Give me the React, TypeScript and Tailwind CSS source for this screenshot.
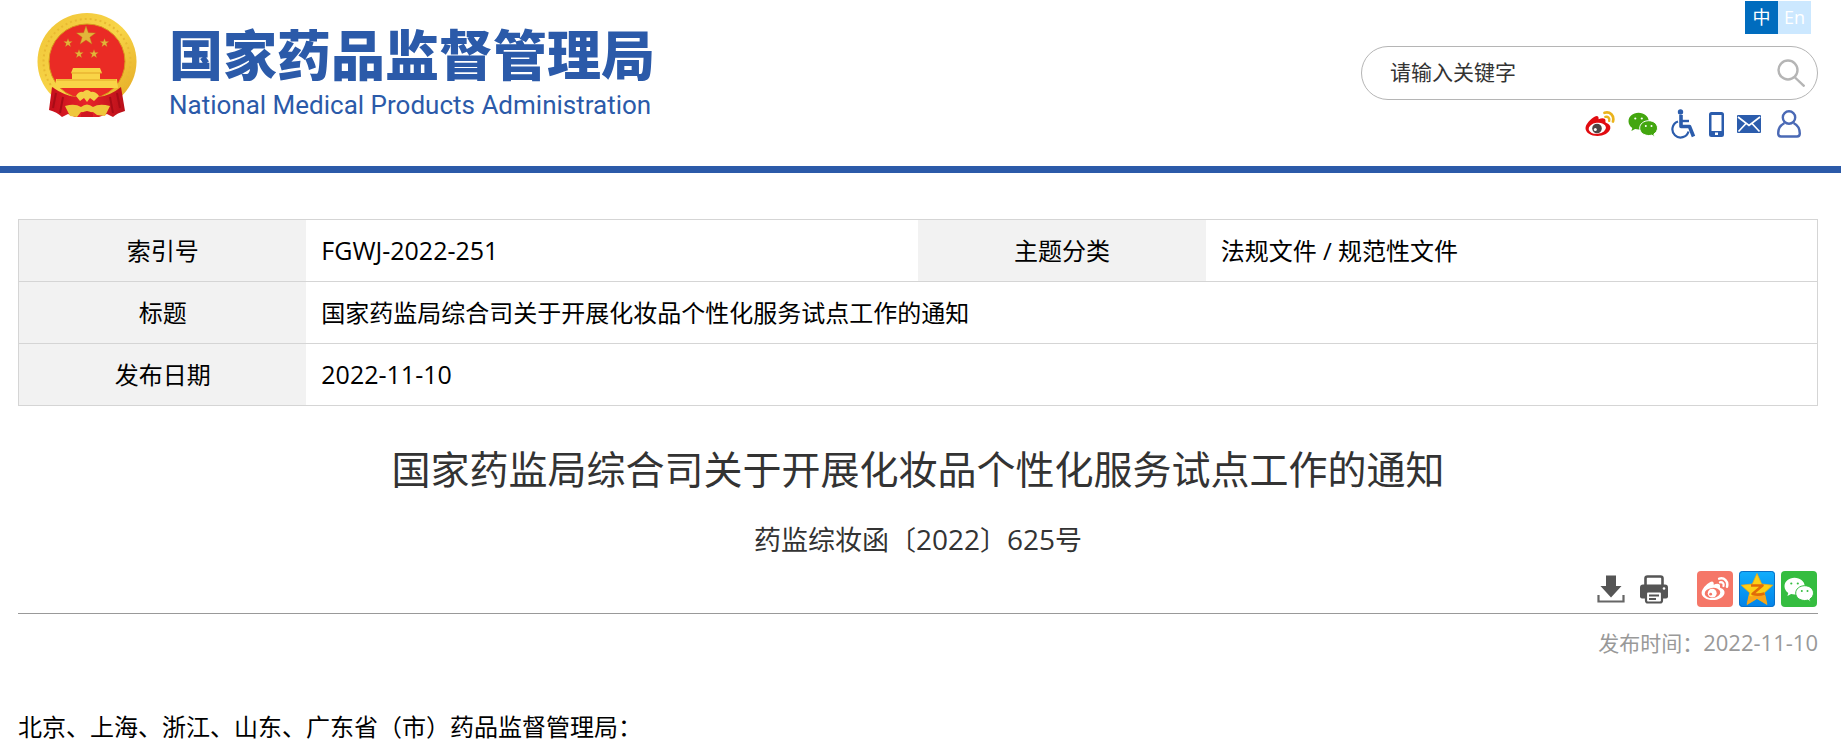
import React from 'react';

const STAR = 'M0,-10 L2.36,-3.24 L9.51,-3.09 L3.82,1.24 L5.88,8.09 L0,4 L-5.88,8.09 L-3.82,1.24 L-9.51,-3.09 L-2.36,-3.24 Z';

function Emblem() {
  return (
    <svg viewBox="0 0 100 106" className="h-[106px] w-[100px]" aria-hidden="true">
      <defs>
        <linearGradient id="gold" x1="0" y1="0" x2="1" y2="1">
          <stop offset="0" stopColor="#efc437" />
          <stop offset="0.5" stopColor="#f8d548" />
          <stop offset="1" stopColor="#e2a420" />
        </linearGradient>
        <linearGradient id="cloth" x1="0" y1="0" x2="1" y2="0">
          <stop offset="0" stopColor="#c50f1b" />
          <stop offset="0.5" stopColor="#e8242a" />
          <stop offset="1" stopColor="#b90f19" />
        </linearGradient>
      </defs>
      <ellipse cx="50" cy="48.500" rx="49.5" ry="48.500" fill="url(#gold)" />
      <ellipse cx="50" cy="48.500" rx="43.5" ry="42.5" fill="none" stroke="#e8b932" strokeWidth="2" strokeDasharray="2 3" />
      <ellipse cx="50" cy="48.500" rx="38" ry="37.500" fill="#ea2b25" stroke="#d9971d" strokeWidth="1" />
      <g fill="#e3b43a" stroke="#b98518" strokeWidth="0.4">
        <path d={STAR} transform="translate(49 23)" />
        <path d={STAR} transform="translate(31 30) scale(.46)" />
        <path d={STAR} transform="translate(67.500 30) scale(.46)" />
        <path d={STAR} transform="translate(42 41) scale(.46)" />
        <path d={STAR} transform="translate(57 41) scale(.46)" />
      </g>
      <path d="M36 55h27l2 5h-2v6h17l1 9H18l1-9h16v-6h-1z" fill="#f9d447" />
      <path d="M34 60h31M20 67h59" stroke="#e2a528" strokeWidth="1" />
      <path d="M15 74 Q28 83 39 84 H61 Q73 83 84 74 L88 98 Q80 100 76 104 L70 101 L62 104 H38 L31 101 L25 104 Q20 99 12 97 Z" fill="url(#cloth)" />
      <path d="M19 80l-3 15M26 84l-3 16M80 80l3 15M73 84l3 16" stroke="#a80c16" strokeWidth="2" />
      <path d="M39 83 Q42 78 46 79 Q50 75 54 79 Q58 78 62 83 L57 88 L53 85 L50 89 L47 85 L43 88 Z" fill="#f4cf45" />
      <path d="M28 93 Q38 90 44 94 Q50 89 56 94 Q62 90 73 93 L68 103 L60 102 L56 99 L44 99 L40 104 L33 103 Z" fill="#efc73c" />
      <path d="M44 101Q50 95 56 101L56 104H44Z" fill="#cf1620" />
    </svg>
  );
}

function WeiboEye({ flat = false }: { flat?: boolean }) {
  const body = flat ? '#ffffff' : '#e10b10';
  const wave = flat ? '#ffffff' : '#eab31c';
  const hole = flat ? '#f57768' : '#ffffff';
  return (
    <svg viewBox="0 0 30 26" className={flat ? 'h-6 w-[28px]' : 'h-[26px] w-[30px]'} aria-hidden="true">
      <path d="M10 5.500C12 4.300 14 5 13.600 8.300C17 6.800 20.500 6.900 20.500 9.800C20.500 10.800 20 11.300 21 11.800C24 12.800 25.800 14.700 25.300 17.500C24.500 22 18.500 25 12.500 25C6 25 .5 21.800 .5 17.300C.5 13.300 5.500 7.800 10 5.500Z" fill={body} />
      <ellipse cx="12.300" cy="17.300" rx={flat ? 8.5 : 8.7} ry="5.500" fill={hole} transform="rotate(-7 12.300 17.300)" />
      <circle cx="12" cy="17.500" r="4.800" fill={flat ? '#ffffff' : '#4d4545'} />
      <circle cx="10.300" cy="18.600" r="1.500" fill={hole} />
      <path d="M19.500 1.800C25 .2 29.500 4.500 28 10.500" fill="none" stroke={wave} strokeWidth="2.700" strokeLinecap="round" />
      <path d="M20.300 5.800C23 5.200 25 7 24.200 9.800" fill="none" stroke={wave} strokeWidth="2.400" strokeLinecap="round" />
    </svg>
  );
}

function WechatBubbles({ color, gap }: { color: string; gap: string }) {
  return (
    <svg viewBox="0 0 30 25" className="h-[25px] w-[30px]" aria-hidden="true">
      <path d="M10.500 .8C4.800 .8 .5 4.500 .5 9.200c0 2.800 1.500 5.200 3.800 6.700L3.400 19l3.700-1.900c1.100.3 2.200.5 3.400.5 5.700 0 10.200-3.700 10.200-8.400S16.200.8 10.500.8Z" fill={color} />
      <path d="M20.700 8.700c-5 0-9 3.200-9 7.400s4 7.400 9 7.400c1 0 2-.1 2.900-.4l3 1.600-.7-2.700c2.200-1.400 3.600-3.500 3.600-5.900 0-4.200-3.800-7.400-8.800-7.400Z" fill={color} stroke={gap} strokeWidth="1" />
      <g fill={gap}>
        <circle cx="7.300" cy="6.500" r="1.100" />
        <circle cx="13.800" cy="6.500" r="1.100" />
        <circle cx="17.800" cy="14" r="1" />
        <circle cx="23.500" cy="14" r="1" />
      </g>
    </svg>
  );
}

function Wheelchair() {
  return (
    <svg viewBox="0 0 25 30" className="h-[30px] w-[25px]" fill="none" stroke="#2b5cac" aria-hidden="true">
      <circle cx="9.500" cy="3" r="2.700" fill="#2b5cac" stroke="none" />
      <path d="M10 6v11.500h8.500l4 10" strokeWidth="3.600" strokeLinejoin="round" />
      <path d="M10 12h8" strokeWidth="2.400" />
      <path d="M7 12.500A8.200 8.200 0 1 0 17.500 22.500" strokeWidth="2.200" />
    </svg>
  );
}

function Phone() {
  return (
    <svg viewBox="0 0 15 25" className="h-[25px] w-[15px]" aria-hidden="true">
      <path fillRule="evenodd" fill="#2b5cac" d="M2.500 0h10A2.500 2.500 0 0 1 15 2.500v20a2.500 2.500 0 0 1-2.500 2.500h-10A2.500 2.500 0 0 1 0 22.500v-20A2.500 2.500 0 0 1 2.500 0ZM2.500 3v16h10V3ZM6 20.500v2.500h3v-2.500Z" />
    </svg>
  );
}

function Mail() {
  return (
    <svg viewBox="0 0 24 18" className="h-[18px] w-6" aria-hidden="true">
      <rect width="24" height="18" rx="1" fill="#2b5cac" />
      <path d="M1 2l11 8.500L23 2M1.500 16.500l7.500-8M22.500 16.500l-7.500-8" fill="none" stroke="#fff" strokeWidth="1.700" />
    </svg>
  );
}

function User() {
  return (
    <svg viewBox="0 0 24 28" className="h-7 w-6" fill="none" stroke="#4a69b5" strokeWidth="2.400" aria-hidden="true">
      <circle cx="12" cy="7.500" r="6.200" />
      <path d="M7.500 13C3.500 15 1.200 19 1.200 23.500Q1.200 26.500 4 26.500H20Q22.800 26.500 22.800 23.500C22.800 19 20.500 15 16.500 13" />
    </svg>
  );
}

function Download() {
  return (
    <svg viewBox="0 0 28 28" className="h-7 w-7" aria-hidden="true">
      <path d="M9 0.500h10v10.500h5.500L14 22.500 3.500 11H9Z" fill="#555" />
      <path d="M1.500 20v6.500h25V20" fill="none" stroke="#666" strokeWidth="2.200" />
    </svg>
  );
}

function Printer() {
  return (
    <svg viewBox="0 0 28 29" className="h-[29px] w-7" aria-hidden="true">
      <path d="M5.500 11V3.500Q5.500 1.500 7.500 1.500h13q2 0 2 2V11" fill="#fff" stroke="#555" strokeWidth="2.600" />
      <path d="M3 9.500h22q3 0 3 3v9q0 2-2 2H2q-2 0-2-2v-9q0-3 3-3Z" fill="#555" />
      <circle cx="24" cy="13.500" r="1.300" fill="#fff" />
      <rect x="6" y="16.500" width="16" height="11" rx="2" fill="#fff" stroke="#555" strokeWidth="2.200" />
      <path d="M9 20.500h10M9 24h7" stroke="#555" strokeWidth="1.800" />
    </svg>
  );
}

function QzoneStar() {
  return (
    <svg viewBox="0 0 36 36" className="size-9" aria-hidden="true">
      <rect x="0.500" y="0.500" width="35" height="35" rx="3" fill="none" stroke="#0a6fc4" />
      <path d="M18 2.500l4.700 10.500 11 1.200-8.300 7.600 2.600 11.700L18 27.500 8 33.500l2.600-11.700-8.300-7.600 11-1.200Z" fill="#fcd016" stroke="#f5a80c" strokeWidth="0.800" strokeLinejoin="round" />
      <path d="M25.400 21.800l2.600 11.700L18 27.500 8 33.500l2-8.500q8 1 15.400-3.200Z" fill="#f9a51a" />
      <path d="M12 14.500h11.500l-10 8.500q6 1.500 12-.5" fill="none" stroke="#e06c08" strokeWidth="2.600" strokeLinejoin="round" />
    </svg>
  );
}

const labelCell = 'bg-[#f2f2f2] text-center font-normal';
const valueCell = 'px-[15px]';
const latin = 'text-[25px]';

export default function App() {
  return (
    <div className="min-h-screen bg-white font-['Open_Sans','Noto_Sans_CJK_SC',sans-serif] text-black">
      <header className="flex justify-between border-b-[7px] border-[#2b5aa9] pr-[23px] pb-[26px] pl-[37px]">
        <a href="#" className="flex gap-8 pt-[13px]">
          <Emblem />
          <span className="flex flex-col pt-[10px] text-[#2b5aa9]">
            <span className="font-['Noto_Sans_CJK_SC',sans-serif] text-[54px] leading-[60px] font-black">国家药品监督管理局</span>
            <span className="font-['Roboto',sans-serif] text-[26px] leading-[44px]">National Medical Products Administration</span>
          </span>
        </a>
        <div className="flex w-[457px] flex-col pt-px">
          <nav className="mr-[7px] flex self-end text-[18px] leading-[33px] text-white">
            <a href="#" className="w-[33px] bg-[#006cbe] text-center">中</a>
            <a href="#" className="w-[33px] bg-[#cce8ff] text-center">En</a>
          </nav>
          <form className="mt-3 flex h-[54px] items-center rounded-full border border-[#b5b5b5] pr-3 pl-7">
            <input
              type="text"
              aria-label="请输入关键字"
              placeholder="请输入关键字"
              className="min-w-0 flex-1 bg-transparent text-[21px] text-[#333] outline-none placeholder:text-[#333]"
            />
            <button type="button" aria-label="搜索">
              <svg viewBox="0 0 28 28" className="size-7" fill="none" stroke="#b5b5b5" strokeWidth="2.400" aria-hidden="true">
                <circle cx="11" cy="11" r="9.500" />
                <path d="M18 18.500l9.500 9" />
              </svg>
            </button>
          </form>
          <div className="mt-2 mr-[17px] flex h-[32px] items-center gap-[13px] self-end">
            <a href="#" aria-label="微博"><WeiboEye /></a>
            <a href="#" aria-label="微信"><WechatBubbles color="#43a60f" gap="#ffffff" /></a>
            <a href="#" aria-label="无障碍"><Wheelchair /></a>
            <a href="#" aria-label="手机版"><Phone /></a>
            <a href="#" aria-label="邮箱"><Mail /></a>
            <a href="#" aria-label="个人中心" className="pl-[3px]"><User /></a>
          </div>
        </div>
      </header>

      <main className="pt-[46px] pr-[23px] pl-[18px]">
        <table className="w-full table-fixed border-collapse border border-[#d5d5d5] text-[24px] leading-[30px]">
          <colgroup>
            <col className="w-[16%]" />
            <col className="w-[34%]" />
            <col className="w-[16%]" />
            <col className="w-[34%]" />
          </colgroup>
          <tbody>
            <tr className="h-[62px] border-b border-[#d5d5d5]">
              <th scope="row" className={labelCell}>索引号</th>
              <td className={valueCell}><span className={latin}>FGWJ-2022-251</span></td>
              <th scope="row" className={labelCell}>主题分类</th>
              <td className={valueCell}>法规文件 / 规范性文件</td>
            </tr>
            <tr className="h-[62px] border-b border-[#d5d5d5]">
              <th scope="row" className={labelCell}>标题</th>
              <td colSpan={3} className={valueCell}>国家药监局综合司关于开展化妆品个性化服务试点工作的通知</td>
            </tr>
            <tr className="h-[62px]">
              <th scope="row" className={labelCell}>发布日期</th>
              <td colSpan={3} className={valueCell}><span className={latin}>2022-11-10</span></td>
            </tr>
          </tbody>
        </table>

        <h1 className="mt-[35px] text-center text-[39px] leading-[56px] text-[#333]">国家药监局综合司关于开展化妆品个性化服务试点工作的通知</h1>
        <p className="mt-6 text-center text-[27px] leading-9 text-[#333]">
          药监综妆函〔<span className="text-[28px]">2022</span>〕<span className="text-[28px]">625</span>号
        </p>

        <div className="mt-[13px] flex items-center justify-end border-b border-[#999] pb-1.5">
          <button type="button" aria-label="下载" className="mr-[15px]"><Download /></button>
          <button type="button" aria-label="打印" className="mr-[29px]"><Printer /></button>
          <div className="mr-px flex gap-1.5">
            <a href="#" aria-label="分享到微博" className="flex size-9 items-center justify-center rounded bg-[#f57768]"><WeiboEye flat /></a>
            <a href="#" aria-label="分享到QQ空间" className="size-9 rounded bg-linear-to-b from-[#12aefc] to-[#0583e8]"><QzoneStar /></a>
            <a href="#" aria-label="分享到微信" className="flex size-9 items-center justify-center rounded bg-[#35bd40]"><WechatBubbles color="#ffffff" gap="#35bd40" /></a>
          </div>
        </div>
        <p className="mt-3 text-right text-[21px] leading-8 text-[#999]">发布时间：<time className="text-[22px]">2022-11-10</time></p>
        <p className="mt-[50px] text-[24px] leading-9">北京、上海、浙江、山东、广东省（市）药品监督管理局：</p>
      </main>
    </div>
  );
}
